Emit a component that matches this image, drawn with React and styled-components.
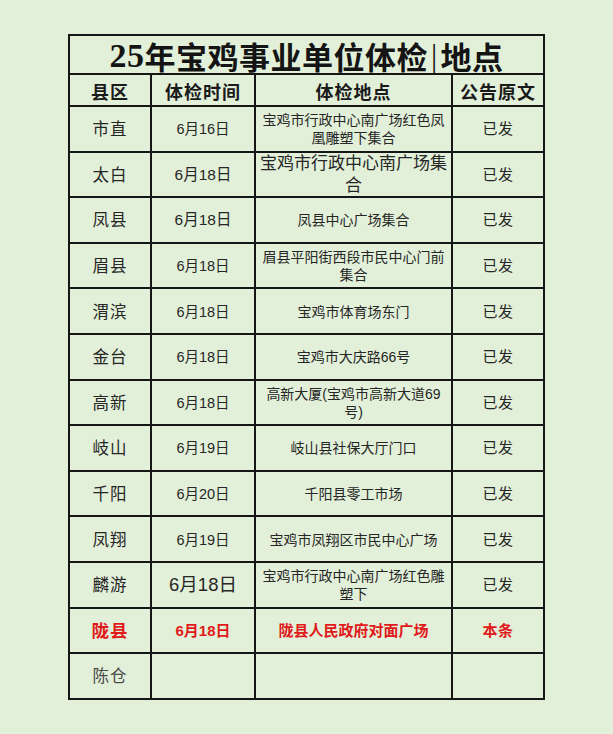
import React from "react";
import styled, { createGlobalStyle } from "styled-components";

const Global = createGlobalStyle`
  html, body { margin: 0; padding: 0; background: #e2f0d9; }
  body { width: 613px; height: 734px; overflow: hidden; }
`;

const SANS = `"Liberation Sans", "Noto Sans CJK SC", sans-serif`;
const CJK = `"Noto Sans CJK SC", sans-serif`;

const Page = styled.div`
  width: 613px;
  height: 734px;
  box-sizing: border-box;
  padding: 34px 0 0 68px;
  background: #e2f0d9;
`;

const Grid = styled.div`
  display: grid;
  grid-template-columns: 80px 102px 195px 90px;
  grid-template-rows: 37px 30px repeat(13, 43.6px);
  gap: 2px;
  padding: 2px;
  width: fit-content;
  background: #161616;
`;

const Cell = styled.div`
  background: #e2f0d9;
  display: flex;
  flex-direction: column;
  align-items: center;
  justify-content: center;
  text-align: center;
  padding: 1px 3px 0;
  color: ${(p) => (p.$red ? "#e0191b" : p.$color || "#262626")};
  font-family: ${SANS};
  font-size: ${(p) => p.$size || 14}px;
  font-weight: ${(p) => (p.$bold ? 700 : 400)};
  line-height: ${(p) => p.$lh || 18}px;
  letter-spacing: ${(p) => p.$ls || 0}px;
  white-space: nowrap;
`;

const TitleCell = styled.div`
  grid-column: 1 / -1;
  background: #e2f0d9;
  display: flex;
  align-items: center;
  justify-content: center;
  font-family: "Liberation Serif", "Noto Sans CJK SC", serif;
  font-size: 31px;
  font-weight: 700;
  color: #141414;
  letter-spacing: 0.5px;
  padding-top: 2px;
`;

const Digits = styled.span`
  font-family: "Liberation Serif", serif;
  font-size: 34px;
  font-weight: 700;
`;

const Bar = styled.span`
  font-family: "Liberation Serif", serif;
  font-weight: 400;
  margin: 0 3px;
`;

const HeadCell = styled(Cell)`
  font-family: ${CJK};
  font-size: 18px;
  font-weight: 700;
  color: #1a1a1a;
  letter-spacing: 1px;
`;

const Line = styled.span`
  display: block;
`;

const rows = [
  { county: "市直", date: "6月16日", place: ["宝鸡市行政中心南广场红色凤", "凰雕塑下集合"], status: "已发" },
  { county: "太白", date: "6月18日", dateSize: 15.5, place: ["宝鸡市行政中心南广场集", "合"], placeSize: 17, placeLh: 22, status: "已发" },
  { county: "凤县", date: "6月18日", dateSize: 15.5, place: ["凤县中心广场集合"], status: "已发" },
  { county: "眉县", date: "6月18日", place: ["眉县平阳街西段市民中心门前", "集合"], status: "已发" },
  { county: "渭滨", date: "6月18日", place: ["宝鸡市体育场东门"], status: "已发" },
  { county: "金台", date: "6月18日", place: ["宝鸡市大庆路66号"], status: "已发" },
  { county: "高新", date: "6月18日", place: ["高新大厦(宝鸡市高新大道69", "号)"], status: "已发" },
  { county: "岐山", date: "6月19日", place: ["岐山县社保大厅门口"], status: "已发" },
  { county: "千阳", date: "6月20日", place: ["千阳县零工市场"], status: "已发" },
  { county: "凤翔", date: "6月19日", place: ["宝鸡市凤翔区市民中心广场"], status: "已发" },
  { county: "麟游", date: "6月18日", dateSize: 18.5, place: ["宝鸡市行政中心南广场红色雕", "塑下"], status: "已发" },
  { county: "陇县", date: "6月18日", place: ["陇县人民政府对面广场"], status: "本条", red: true },
  { county: "陈仓", date: "", place: [], status: "" },
];

export default function App() {
  return (
    <>
      <Global />
      <Page>
        <Grid>
          <TitleCell>
            <Digits>25</Digits>年宝鸡事业单位体检<Bar>|</Bar>地点
          </TitleCell>
          <HeadCell>县区</HeadCell>
          <HeadCell>体检时间</HeadCell>
          <HeadCell>体检地点</HeadCell>
          <HeadCell>公告原文</HeadCell>
          {rows.map((r) => (
            <React.Fragment key={r.county}>
              <Cell
                $size={r.red ? 17.5 : 16.5}
                $ls={1}
                $bold={r.red}
                $red={r.red}
                $color={r.county === "陈仓" ? "#4a4a4a" : "#262626"}
              >
                {r.county}
              </Cell>
              <Cell $size={r.red ? 15 : r.dateSize || 14.5} $bold={r.red} $red={r.red}>
                {r.date}
              </Cell>
              <Cell
                $size={r.red ? 15 : r.placeSize || 14}
                $lh={r.placeLh || 18}
                $bold={r.red}
                $red={r.red}
              >
                {r.place.map((l) => (
                  <Line key={l}>{l}</Line>
                ))}
              </Cell>
              <Cell $size={15} $ls={0.5} $bold={r.red} $red={r.red}>
                {r.status}
              </Cell>
            </React.Fragment>
          ))}
        </Grid>
      </Page>
    </>
  );
}
